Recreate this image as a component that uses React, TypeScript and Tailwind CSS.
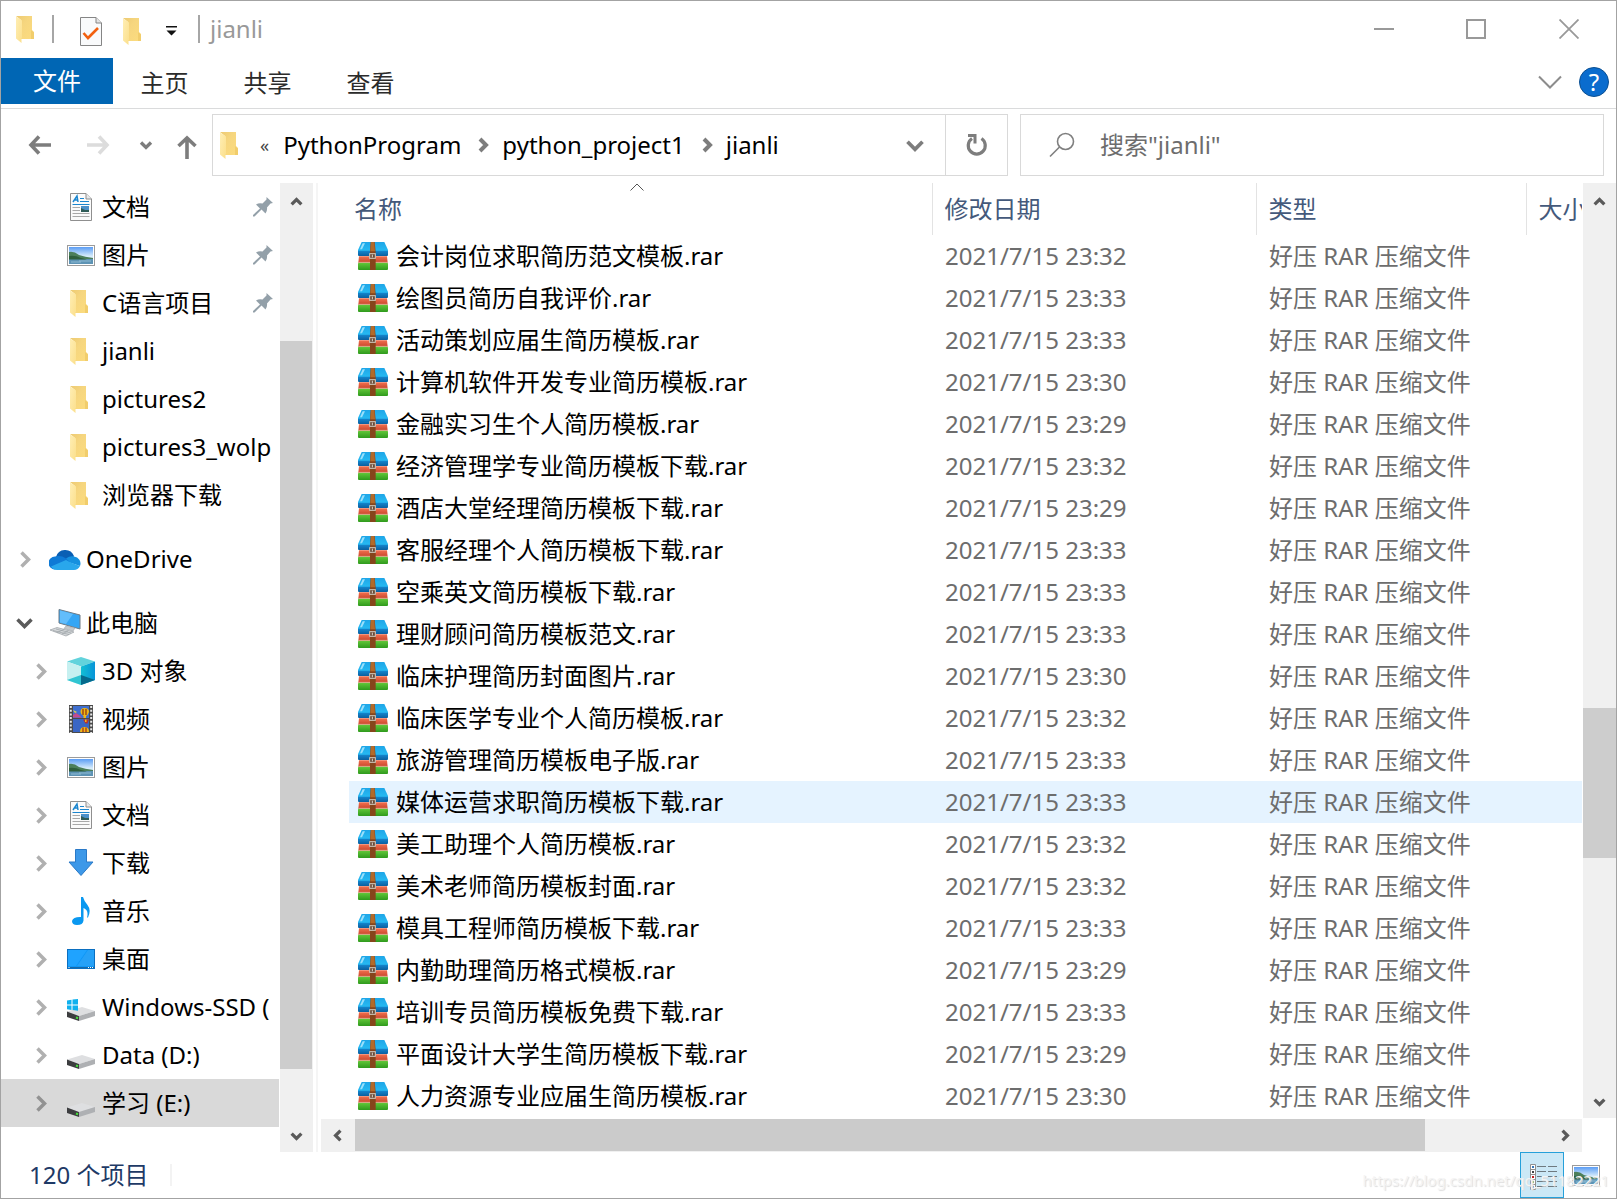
import type { ReactNode } from 'react'

interface FileRow {
  name: string
  time: string
}

interface NavItem {
  label: string
  icon: ReactNode
  level: 0 | 1
  arrow?: 'right' | 'down'
  pinned?: boolean
  active?: boolean
  gap?: boolean
}

const files: FileRow[] = [
  { name: '会计岗位求职简历范文模板.rar', time: '23:32' },
  { name: '绘图员简历自我评价.rar', time: '23:33' },
  { name: '活动策划应届生简历模板.rar', time: '23:33' },
  { name: '计算机软件开发专业简历模板.rar', time: '23:30' },
  { name: '金融实习生个人简历模板.rar', time: '23:29' },
  { name: '经济管理学专业简历模板下载.rar', time: '23:32' },
  { name: '酒店大堂经理简历模板下载.rar', time: '23:29' },
  { name: '客服经理个人简历模板下载.rar', time: '23:33' },
  { name: '空乘英文简历模板下载.rar', time: '23:33' },
  { name: '理财顾问简历模板范文.rar', time: '23:33' },
  { name: '临床护理简历封面图片.rar', time: '23:30' },
  { name: '临床医学专业个人简历模板.rar', time: '23:32' },
  { name: '旅游管理简历模板电子版.rar', time: '23:33' },
  { name: '媒体运营求职简历模板下载.rar', time: '23:33' },
  { name: '美工助理个人简历模板.rar', time: '23:32' },
  { name: '美术老师简历模板封面.rar', time: '23:32' },
  { name: '模具工程师简历模板下载.rar', time: '23:33' },
  { name: '内勤助理简历格式模板.rar', time: '23:29' },
  { name: '培训专员简历模板免费下载.rar', time: '23:33' },
  { name: '平面设计大学生简历模板下载.rar', time: '23:29' },
  { name: '人力资源专业应届生简历模板.rar', time: '23:30' },
]

const hoveredRow = 13

const chevronPaths = {
  up: 'M2 9 L8 3 L14 9',
  down: 'M2 3 L8 9 L14 3',
  left: 'M9 2 L3 8 L9 14',
  right: 'M3 2 L9 8 L3 14',
}

function Chevron({ dir, className, width = 4 }: { dir: keyof typeof chevronPaths; className: string; width?: number }) {
  const wide = dir === 'up' || dir === 'down'
  return (
    <svg viewBox={wide ? '0 0 16 12' : '0 0 12 16'} className={className} fill="none" stroke="currentColor" strokeWidth={width}>
      <path d={chevronPaths[dir]} />
    </svg>
  )
}

function FolderIcon() {
  return (
    <svg viewBox="0 0 22 28" className="h-7 w-[22px] shrink-0">
      <defs>
        <linearGradient id="folderBack" x1="0" y1="0" x2="1" y2="1">
          <stop offset="0" stopColor="#edca72" />
          <stop offset="0.4" stopColor="#f6d67f" />
          <stop offset="1" stopColor="#fcdc7e" />
        </linearGradient>
        <linearGradient id="folderFront" x1="0" y1="0" x2="1" y2="1">
          <stop offset="0" stopColor="#ffeeb4" />
          <stop offset="1" stopColor="#fbdf8b" />
        </linearGradient>
      </defs>
      <path d="M0 1H16V15L18 17V24H5V5Z" fill="url(#folderBack)" />
      <path d="M15 15L18 17.500V24H15Z" fill="#f1cd6c" />
      <path d="M0 1.500L6 5.500V23H5.500V28L0 23.500Z" fill="url(#folderFront)" />
    </svg>
  )
}

function RarIcon() {
  return (
    <svg viewBox="0 0 90 84" className="h-7 w-[30px] shrink-0">
      <defs>
        <linearGradient id="rarCover" x1="0" y1="0" x2="0" y2="1">
          <stop offset="0" stopColor="#1fa6e8" />
          <stop offset="1" stopColor="#27bdf3" />
        </linearGradient>
        <linearGradient id="rarBlue" x1="0" y1="0" x2="0" y2="1">
          <stop offset="0" stopColor="#1587cf" />
          <stop offset="1" stopColor="#0b5f9f" />
        </linearGradient>
        <linearGradient id="rarRed" x1="0" y1="0" x2="0" y2="1">
          <stop offset="0" stopColor="#f1704f" />
          <stop offset="1" stopColor="#c8452b" />
        </linearGradient>
        <linearGradient id="rarGreen" x1="0" y1="0" x2="0" y2="1">
          <stop offset="0" stopColor="#63c83a" />
          <stop offset="1" stopColor="#2f9a1d" />
        </linearGradient>
      </defs>
      <path d="M11 0H79L90 24V30H0V24Z" fill="url(#rarCover)" />
      <path d="M14 4H21L12 22H6Z" fill="#9ae0fb" />
      <path d="M0 26H90V39Q90 42 87 42H3Q0 42 0 39Z" fill="url(#rarBlue)" />
      <path d="M3 43H87L89 62H1Z" fill="url(#rarRed)" />
      <rect x="0" y="62" width="90" height="22" rx="3" fill="url(#rarGreen)" />
      <path d="M3 61H87" stroke="#e9c4a8" strokeWidth="2" />
      <path d="M38 0H50L53 30V84H36V30Z" fill="#86451b" />
      <path d="M39 0H49L51 28H37Z" fill="#b26a2a" />
      <rect x="35" y="35" width="17" height="14" fill="#6b4a35" stroke="#d3cdc2" strokeWidth="3" />
      <path d="M43 38V46" stroke="#dcd7cd" strokeWidth="3" />
    </svg>
  )
}

function DocIcon() {
  return (
    <svg viewBox="0 0 22 28" className="h-7 w-[22px]" fill="none">
      <path d="M0.500 0.500H16L21.500 6V27.500H0.500Z" fill="#fbfbfb" stroke="#8f8f8f" />
      <path d="M16 0.500V6H21.500" fill="#e9e9e9" stroke="#8f8f8f" />
      <path d="M3 9L7 3L8 9M5 7H8" stroke="#1b86cf" strokeWidth="1.500" />
      <path d="M10 5.500H14M10 8.500H19M2.500 11.500H19.500" stroke="#1b86cf" />
      <path d="M2.500 14.500H10M2.500 17.500H10M2.500 20.500H19.500M2.500 23.500H19.500" stroke="#a9a9a9" />
      <rect x="11" y="13" width="8" height="6" fill="#4b90c9" />
      <path d="M11 15L15 17H19V19H11Z" fill="#2f5c58" />
    </svg>
  )
}

function PictureIcon() {
  return (
    <svg viewBox="0 0 28 21" className="h-[21px] w-7 shrink-0">
      <defs>
        <linearGradient id="sky" x1="0" y1="0" x2="0" y2="1">
          <stop offset="0" stopColor="#5b9df4" />
          <stop offset="0.550" stopColor="#d9edfb" />
          <stop offset="1" stopColor="#a6cbe2" />
        </linearGradient>
      </defs>
      <rect x="0.500" y="0.500" width="27" height="20" fill="#fff" stroke="#9b9b9b" />
      <rect x="2" y="2" width="24" height="17" fill="url(#sky)" />
      <path d="M2 13H26V19H2Z" fill="#5d93b4" />
      <path d="M2 7Q7 6 12 10Q18 12 26 13V14H2Z" fill="#4c7f5a" />
      <path d="M2 11Q8 10 14 13L20 14.500H2Z" fill="#2f5f3c" />
      <path d="M4 17H14M12 16H24" stroke="#9cc4da" strokeWidth="0.800" />
    </svg>
  )
}

function CloudIcon() {
  return (
    <svg viewBox="0 0 32 21" className="h-[21px] w-8">
      <path d="M7 8A9.500 9.500 0 0 1 25 7L22 13L10 12Z" fill="#0a5fb4" />
      <path d="M6 7.500Q12 6 17 9.500L23 13L6 20.500A6.500 6.500 0 0 1 6 7.500Z" fill="#0f7ad6" />
      <path d="M17 9.500Q21 6.500 25 7.500A7 7 0 0 1 31 17L22 14Z" fill="#1590df" />
      <path d="M2 17.500L17 11Q22 14 31 17Q29 21 25 21H8Q4 21 2 17.500Z" fill="#29a7ec" />
    </svg>
  )
}

function ComputerIcon() {
  return (
    <svg viewBox="0 0 32 28" className="h-7 w-8">
      <path d="M10 0.500L31 6V20L10 14Z" fill="#35a6f5" stroke="#6e7b86" />
      <path d="M11 1.500L24 5L17 15L11 13.500Z" fill="#62bdfb" />
      <path d="M17 17L26 19L24 22L15 19.500Z" fill="#c5c9cc" stroke="#9fa5aa" strokeWidth="0.600" />
      <path d="M1 21L8 18.500L25 23L17 27Z" fill="#d6d9db" stroke="#a3a8ac" strokeWidth="0.800" />
      <path d="M4 21.500L20 25.500M7 20L22 24M8 23.500L15 20.500M13 25L19 22" stroke="#9aa0a5" strokeWidth="0.700" />
    </svg>
  )
}

function CubeIcon() {
  return (
    <svg viewBox="0 0 28 28" className="h-7 w-7">
      <defs>
        <linearGradient id="cubeRight" x1="0" y1="0" x2="1" y2="0">
          <stop offset="0" stopColor="#12bfd3" />
          <stop offset="1" stopColor="#0894d8" />
        </linearGradient>
      </defs>
      <path d="M14 0L28 4.500L14 9.500L0 4.500Z" fill="#62d3dc" />
      <path d="M0 4.500L14 9.500V28L0 23Z" fill="#c6f0f0" />
      <path d="M0 23L14 18V28Z" fill="#31c5d2" />
      <path d="M28 4.500L14 9.500V28L28 23Z" fill="url(#cubeRight)" />
      <path d="M28 23L14 18V28Z" fill="#066a8c" />
    </svg>
  )
}

function VideoIcon() {
  return (
    <svg viewBox="0 0 24 28" className="h-7 w-6">
      <rect width="24" height="28" fill="#4a4a4a" />
      <path d="M1.800 1V28M22.200 1V28" stroke="#e8e8e8" strokeWidth="2" strokeDasharray="2 1.700" />
      <rect x="4" y="1" width="16" height="12" fill="#3f6fd0" />
      <rect x="4" y="14" width="16" height="13" fill="#3a66c4" />
      <path d="M4 12.500V10L7 8L10 10L13 12.500Z" fill="#c54b8d" />
      <path d="M4 5L8 7L6 8Z" fill="#e7d247" />
      <path d="M15.500 3Q20 3 20 7Q19 10 17 11V13H14.500V11Q11.500 9 11.500 7Q11.500 3 15.500 3Z" fill="#f0b714" />
      <path d="M14 4V10M17 4V10" stroke="#8a2f14" strokeWidth="1.200" />
      <path d="M14 14.500H20L18.500 18.500H16.500Z" fill="#b8322a" />
      <path d="M16 14.500H17.500V17H16Z" fill="#f0b714" />
      <path d="M11 27Q11 22 15.500 22Q20 22 20 27Z" fill="#f0b714" />
      <path d="M14 22.500V27M17 22.500V27" stroke="#9f2a1c" strokeWidth="1.200" />
    </svg>
  )
}

function DownloadIcon() {
  return (
    <svg viewBox="0 0 26 28" className="h-7 w-[26px]">
      <path d="M7.500 0.500H18.500V13H25L13 26.500L1 13H7.500Z" fill="#3d98e8" stroke="#2a79c7" />
    </svg>
  )
}

function MusicIcon() {
  return (
    <svg viewBox="0 0 20 28" className="h-7 w-5">
      <path d="M10 0H12Q13 4 16.500 8Q20.500 13 17 20.500H16Q18 13 12.500 11V23.500Q12 28 6 28Q1 28 1 24Q2 20 9 20H10Z" fill="#0a98f0" />
    </svg>
  )
}

function DesktopIcon() {
  return (
    <svg viewBox="0 0 28 20" className="h-5 w-7">
      <rect x="0.500" y="0.500" width="27" height="19" fill="#0f97f6" stroke="#0b6fc0" />
      <path d="M20 1L9 17H1V1Z" fill="#1fa3ff" />
      <path d="M27 1V17H10L21 1Z" fill="#36a9f8" opacity="0.600" />
      <path d="M1 18.500H27" stroke="#1769a8" />
      <path d="M1.500 18.500H3M21 18.500H26" stroke="#fff" strokeDasharray="1 1" />
    </svg>
  )
}

function DriveIcon({ system }: { system?: boolean }) {
  return (
    <svg viewBox="0 0 28 28" className="h-7 w-7">
      <path d="M0 18.500L15 14L28 18L12 23Z" fill="#dedfe1" />
      <path d="M12 23L28 18V23L12 28Z" fill="#aeb0b3" />
      <path d="M0 18.500L12 23V28L0 24Z" fill="#3c3d3f" />
      <path d="M9 24.500L11 25.200" stroke="#46e03c" strokeWidth="2" />
      {system && (
        <path
          d="M0 7.500L4.500 6.800V11.500H0ZM5.500 6.600L11 6V11.500H5.500ZM0 12.500H4.500V17L0 16.300ZM5.500 12.500H11V17.700L5.500 17.100Z"
          fill="#0fb1ee"
        />
      )}
    </svg>
  )
}

function PinIcon() {
  return (
    <svg viewBox="0 0 20 20" className="h-5 w-5 shrink-0">
      <path d="M13.500 0L20 6L17.500 6.500L14 10.500Q14.500 14 12.500 16.500L8.500 12.500L1.500 19.500H0V18L7 11.500L3 7.500Q6 5.500 9.500 6.500L13.500 2.500Z" fill="#93a0a9" />
    </svg>
  )
}

const navItems: NavItem[] = [
  { label: '文档', icon: <DocIcon />, level: 1, pinned: true },
  { label: '图片', icon: <PictureIcon />, level: 1, pinned: true },
  { label: 'C语言项目', icon: <FolderIcon />, level: 1, pinned: true },
  { label: 'jianli', icon: <FolderIcon />, level: 1 },
  { label: 'pictures2', icon: <FolderIcon />, level: 1 },
  { label: 'pictures3_wolp', icon: <FolderIcon />, level: 1 },
  { label: '浏览器下载', icon: <FolderIcon />, level: 1 },
  { label: 'OneDrive', icon: <CloudIcon />, level: 0, arrow: 'right', gap: true },
  { label: '此电脑', icon: <ComputerIcon />, level: 0, arrow: 'down', gap: true },
  { label: '3D 对象', icon: <CubeIcon />, level: 1, arrow: 'right' },
  { label: '视频', icon: <VideoIcon />, level: 1, arrow: 'right' },
  { label: '图片', icon: <PictureIcon />, level: 1, arrow: 'right' },
  { label: '文档', icon: <DocIcon />, level: 1, arrow: 'right' },
  { label: '下载', icon: <DownloadIcon />, level: 1, arrow: 'right' },
  { label: '音乐', icon: <MusicIcon />, level: 1, arrow: 'right' },
  { label: '桌面', icon: <DesktopIcon />, level: 1, arrow: 'right' },
  { label: 'Windows-SSD (', icon: <DriveIcon system />, level: 1, arrow: 'right' },
  { label: 'Data (D:)', icon: <DriveIcon />, level: 1, arrow: 'right' },
  { label: '学习 (E:)', icon: <DriveIcon />, level: 1, arrow: 'right', active: true },
]

function TitleBar() {
  return (
    <header className="flex h-[57px] shrink-0 items-start">
      <div className="flex h-14 items-center pl-[15px]">
        <FolderIcon />
        <span className="ml-[14px] h-7 w-0.5 bg-[#a6a6a6]" />
        <button type="button" aria-label="属性" className="mt-1 ml-[26px]">
          <svg viewBox="0 0 22 29" className="h-[29px] w-[22px]" fill="none">
            <path d="M0.500 0.500H16L21.500 6V28.500H0.500Z" fill="#f9fafb" stroke="#858585" />
            <path d="M16 0.500V6H21.500" fill="#e4e4e4" stroke="#858585" />
            <path d="M3.500 16L8 21L18 11" stroke="#f2600f" strokeWidth="2.600" />
          </svg>
        </button>
        <button type="button" aria-label="新建文件夹" className="mt-1 ml-[21px]">
          <FolderIcon />
        </button>
        <button type="button" aria-label="自定义快速访问工具栏" className="mt-1 ml-[21px]">
          <svg viewBox="0 0 11 10" className="h-2.5 w-[11px]">
            <path d="M0 0H11V1.500H0ZM0.500 4.500H10.500L5.500 9.500Z" fill="#111" />
          </svg>
        </button>
        <span className="ml-[21px] h-7 w-0.5 bg-[#a6a6a6]" />
        <h1 className="ml-[10px] text-2xl leading-8 text-[#999]">jianli</h1>
      </div>
      <div className="ml-auto flex h-14 items-center pr-px text-[#999]">
        <button type="button" aria-label="最小化" className="flex w-[92px] justify-center">
          <svg viewBox="0 0 20 20" className="h-5 w-5" stroke="currentColor" strokeWidth="2">
            <path d="M0 10H20" />
          </svg>
        </button>
        <button type="button" aria-label="最大化" className="flex w-[92px] justify-center">
          <svg viewBox="0 0 20 20" className="h-5 w-5" stroke="currentColor" strokeWidth="2" fill="none">
            <path d="M1 1H19V19H1Z" />
          </svg>
        </button>
        <button type="button" aria-label="关闭" className="flex w-[93px] justify-center">
          <svg viewBox="0 0 20 20" className="h-5 w-5" stroke="currentColor" strokeWidth="1.800">
            <path d="M0.500 0.500L19.500 19.500M19.500 0.500L0.500 19.500" />
          </svg>
        </button>
      </div>
    </header>
  )
}

function RibbonTabs() {
  return (
    <nav className="flex h-[51px] shrink-0 border-b border-[#dadbdc] text-[#2b2b2b]">
      <button type="button" className="h-[46px] w-28 bg-[#0066b4] text-white">
        文件
      </button>
      {['主页', '共享', '查看'].map(tab => (
        <button key={tab} type="button" className="w-[103px]">
          {tab}
        </button>
      ))}
      <div className="ml-auto flex items-center pr-[7px] pb-0.5">
        <button type="button" aria-label="最小化功能区" className="text-[#8c8c8c]">
          <svg viewBox="0 0 24 14" className="h-[14px] w-6" fill="none" stroke="currentColor" strokeWidth="2">
            <path d="M1 1.500L12 12.500L23 1.500" />
          </svg>
        </button>
        <button
          type="button"
          aria-label="帮助"
          className="ml-[17px] flex h-[30px] w-[30px] items-center justify-center rounded-full border border-[#0b4f91] bg-[#0a6cce] text-white"
        >
          ?
        </button>
      </div>
    </nav>
  )
}

function AddressBar() {
  return (
    <div className="flex h-[74px] shrink-0 items-start pt-[5px] pr-3">
      <div className="flex h-[62px] w-[211px] shrink-0 items-center pl-[27px] text-[#7d7d7d]">
        <button type="button" aria-label="返回">
          <svg viewBox="0 0 24 20" className="h-5 w-6" fill="none" stroke="currentColor" strokeWidth="3.600">
            <path d="M23 10H3M11 1.500L3 10L11 18.500" />
          </svg>
        </button>
        <button type="button" aria-label="前进" className="ml-[34px] text-[#dcdcdc]">
          <svg viewBox="0 0 24 20" className="h-5 w-6" fill="none" stroke="currentColor" strokeWidth="3.600">
            <path d="M1 10H21M13 1.500L21 10L13 18.500" />
          </svg>
        </button>
        <button type="button" aria-label="最近浏览的位置" className="ml-[29px]">
          <Chevron dir="down" className="h-[10px] w-[14px]" />
        </button>
        <button type="button" aria-label="上移" className="ml-6 pt-1">
          <svg viewBox="0 0 20 24" className="h-6 w-5" fill="none" stroke="currentColor" strokeWidth="3.600">
            <path d="M10 24V3M1.500 11L10 3L18.500 11" />
          </svg>
        </button>
      </div>
      <div className="flex h-[62px] min-w-0 flex-[794] items-center border border-[#d9d9d9] text-black">
        <div className="flex flex-1 items-center pl-[7px]">
          <FolderIcon />
          <span className="ml-[18px] text-lg leading-6 text-[#444]">«</span>
          <button type="button" className="ml-[14px]">PythonProgram</button>
          <Chevron dir="right" className="ml-4 h-4 w-3 text-[#7d7d7d]" />
          <button type="button" className="ml-[13px]">python_project1</button>
          <Chevron dir="right" className="ml-4 h-4 w-3 text-[#7d7d7d]" />
          <button type="button" className="ml-[13px]">jianli</button>
        </div>
        <button type="button" aria-label="以前的位置" className="px-5 text-[#7d7d7d]">
          <Chevron dir="down" className="h-[15px] w-5" width={3} />
        </button>
        <button type="button" aria-label="刷新" className="flex h-full w-[62px] items-center justify-center border-l border-[#d9d9d9] text-[#7d7d7d]">
          <svg viewBox="0 0 22 24" className="h-6 w-[22px]" fill="none" stroke="currentColor" strokeWidth="3.200">
            <path d="M15.500 5.500A8.500 8.500 0 1 1 6 5.500" />
            <path d="M2 2.500H9V10.500" strokeWidth="3" />
          </svg>
        </button>
      </div>
      <label className="ml-3 flex h-[62px] min-w-0 flex-[554] items-center border border-[#d9d9d9] pl-7">
        <svg viewBox="0 0 26 26" className="h-[26px] w-[26px] shrink-0" fill="none" stroke="#7f7f7f" strokeWidth="1.600">
          <circle cx="16.500" cy="9.500" r="8" />
          <path d="M10.500 15L1 24.500" />
        </svg>
        <input
          type="text"
          aria-label="搜索"
          placeholder={'搜索"jianli"'}
          className="ml-[25px] w-full min-w-0 outline-none placeholder:text-[#6d6d6d]"
        />
      </label>
    </div>
  )
}

function Sidebar() {
  return (
    <aside className="flex w-[312px] shrink-0">
      <ul className="w-[279px] overflow-hidden text-black">
        {navItems.map((item, i) => (
          <li key={i} className={item.gap ? 'mt-4' : ''}>
            <button
              type="button"
              className={`flex h-12 w-[278px] items-center pr-[6px] text-left whitespace-nowrap ${
                item.level ? 'pl-[30px]' : 'pl-[14px]'
              } ${item.active ? 'bg-[#d9d9d9]' : ''}`}
            >
              <span className="mr-[15px] flex w-[19px] shrink-0 justify-center">
                {item.arrow === 'right' && (
                  <Chevron dir="right" className={`h-[19px] w-[14px] ${item.active ? 'text-[#929292]' : 'text-[#b0b0b0]'}`} width={3} />
                )}
                {item.arrow === 'down' && <Chevron dir="down" className="h-[14px] w-[19px] text-[#5a5a5a]" width={3} />}
              </span>
              <span className="mr-[5px] flex w-8 shrink-0 justify-center">{item.icon}</span>
              <span className="flex-1">{item.label}</span>
              {item.pinned && <PinIcon />}
            </button>
          </li>
        ))}
      </ul>
      <div className="flex w-[33px] flex-col bg-[#f0f0f0] text-[#5a5a5a]">
        <button type="button" aria-label="向上滚动" className="flex h-[38px] items-center justify-center">
          <Chevron dir="up" className="h-[10px] w-[13px]" />
        </button>
        <div className="flex-[120]" />
        <div className="mr-px flex-[728] bg-[#cdcdcd]" />
        <div className="flex-[50]" />
        <button type="button" aria-label="向下滚动" className="flex h-[33px] items-center justify-center">
          <Chevron dir="down" className="h-[10px] w-[13px]" />
        </button>
      </div>
    </aside>
  )
}

function FileTable() {
  return (
    <table className="w-full min-w-[1233px] table-fixed text-left whitespace-nowrap">
      <colgroup>
        <col className="w-[583px]" />
        <col className="w-[324px]" />
        <col className="w-[270px]" />
        <col />
      </colgroup>
      <thead className="text-[#44597b]">
        <tr className="h-[52px]">
          <th className="relative pl-[5px] font-normal">
            名称
            <svg viewBox="0 0 14 8" className="absolute top-0 left-[281px] h-2 w-[14px]" fill="none" stroke="#555">
              <path d="M0.500 7.500L7 1L13.500 7.500" />
            </svg>
          </th>
          <th className="border-l border-[#e3e3e3] pl-3 font-normal">修改日期</th>
          <th className="border-l border-[#e3e3e3] pl-3 font-normal">类型</th>
          <th className="overflow-hidden border-l border-[#e3e3e3] pl-3 font-normal">大小</th>
        </tr>
      </thead>
      <tbody className="text-[#6d6d6d]">
        {files.map((file, i) => (
          <tr key={file.name} className={`h-[42px] ${i === hoveredRow ? 'bg-[#e5f3ff]' : ''}`}>
            <td className="p-0 text-black">
              <div className="flex items-center gap-2 pl-[9px]">
                <RarIcon />
                <span>{file.name}</span>
              </div>
            </td>
            <td className="p-0 pl-[13px]">2021/7/15 {file.time}</td>
            <td className="p-0 pl-[13px]">好压 RAR 压缩文件</td>
            <td className="p-0" />
          </tr>
        ))}
      </tbody>
    </table>
  )
}

function FilePane() {
  return (
    <main className="ml-[3px] flex min-w-0 flex-1 border-l-2 border-[#f5f5f5] pl-[3px]">
      <div className="flex min-w-0 flex-1 flex-col">
        <div className="mr-px min-h-0 flex-1 overflow-hidden pl-7">
          <FileTable />
        </div>
        <div className="mr-px flex h-[33px] shrink-0 bg-[#f0f0f0] text-[#5a5a5a]">
          <button type="button" aria-label="向左滚动" className="flex w-[34px] items-center justify-center">
            <Chevron dir="left" className="h-[13px] w-[10px]" />
          </button>
          <div className="mb-px flex-[1070] bg-[#cbcbcb]" />
          <div className="flex-[123]" />
          <button type="button" aria-label="向右滚动" className="flex w-[34px] items-center justify-center">
            <Chevron dir="right" className="h-[13px] w-[10px]" />
          </button>
        </div>
      </div>
      <div className="mb-[34px] flex w-[33px] shrink-0 flex-col bg-[#f0f0f0] text-[#5a5a5a]">
        <button type="button" aria-label="向上滚动" className="flex h-[38px] items-center justify-center">
          <Chevron dir="up" className="h-[10px] w-[13px]" />
        </button>
        <div className="flex-[487]" />
        <div className="flex-[150] bg-[#cdcdcd]" />
        <div className="flex-[227]" />
        <button type="button" aria-label="向下滚动" className="flex h-[33px] items-center justify-center">
          <Chevron dir="down" className="h-[10px] w-[13px]" />
        </button>
      </div>
    </main>
  )
}

function StatusBar() {
  return (
    <footer className="relative flex h-[46px] shrink-0 items-center pl-7 text-[#1e3a66]">
      <span>120 个项目</span>
      <span className="ml-[22px] h-[22px] w-0.5 bg-[#f3f3f3]" />
      <div className="ml-auto flex h-full items-center">
        <button type="button" aria-label="详细信息" className="flex h-full w-11 items-center justify-center border border-[#26a0da] bg-[#cbe8f6]">
          <svg viewBox="0 0 28 26" className="mt-1 ml-1 h-[26px] w-7" fill="none">
            <path d="M0.500 0.500H5.500V25.500H0.500ZM0.500 5.500H5.500M0.500 10.500H5.500M0.500 15.500H5.500M0.500 20.500H5.500" fill="#fff" stroke="#8f8f8f" />
            <path d="M7 2.500H16M18 2.500H27M7 7.500H16M18 7.500H27M7 12.500H16M18 12.500H27M7 17.500H16M18 17.500H27M7 22.500H16M18 22.500H27" stroke="#6f7a80" />
            <path d="M2 3H4M2 23H4" stroke="#3677b8" strokeWidth="2" />
            <path d="M2 8H4" stroke="#444" strokeWidth="2" />
            <path d="M2 13H4" stroke="#c41f1f" strokeWidth="2" />
            <path d="M2 18H4" stroke="#5f9e3b" strokeWidth="2" />
          </svg>
        </button>
        <button type="button" aria-label="大缩略图" className="flex w-[52px] justify-start pl-2">
          <PictureIcon />
        </button>
      </div>
      <span className="pointer-events-none absolute right-[7px] bottom-[6px] text-[15px] leading-6 text-[#f4f4f4] [text-shadow:1px_1px_1px_#dcdcdc]">
        https://blog.csdn.net/qq_51182221
      </span>
    </footer>
  )
}

export default function App() {
  return (
    <div className="flex h-screen min-h-[600px] flex-col overflow-hidden border border-[#a3a3a3] bg-white font-['Noto_Sans','Noto_Sans_CJK_SC',sans-serif] text-2xl leading-8">
      <TitleBar />
      <RibbonTabs />
      <AddressBar />
      <div className="flex min-h-0 flex-1">
        <Sidebar />
        <FilePane />
      </div>
      <StatusBar />
    </div>
  )
}
